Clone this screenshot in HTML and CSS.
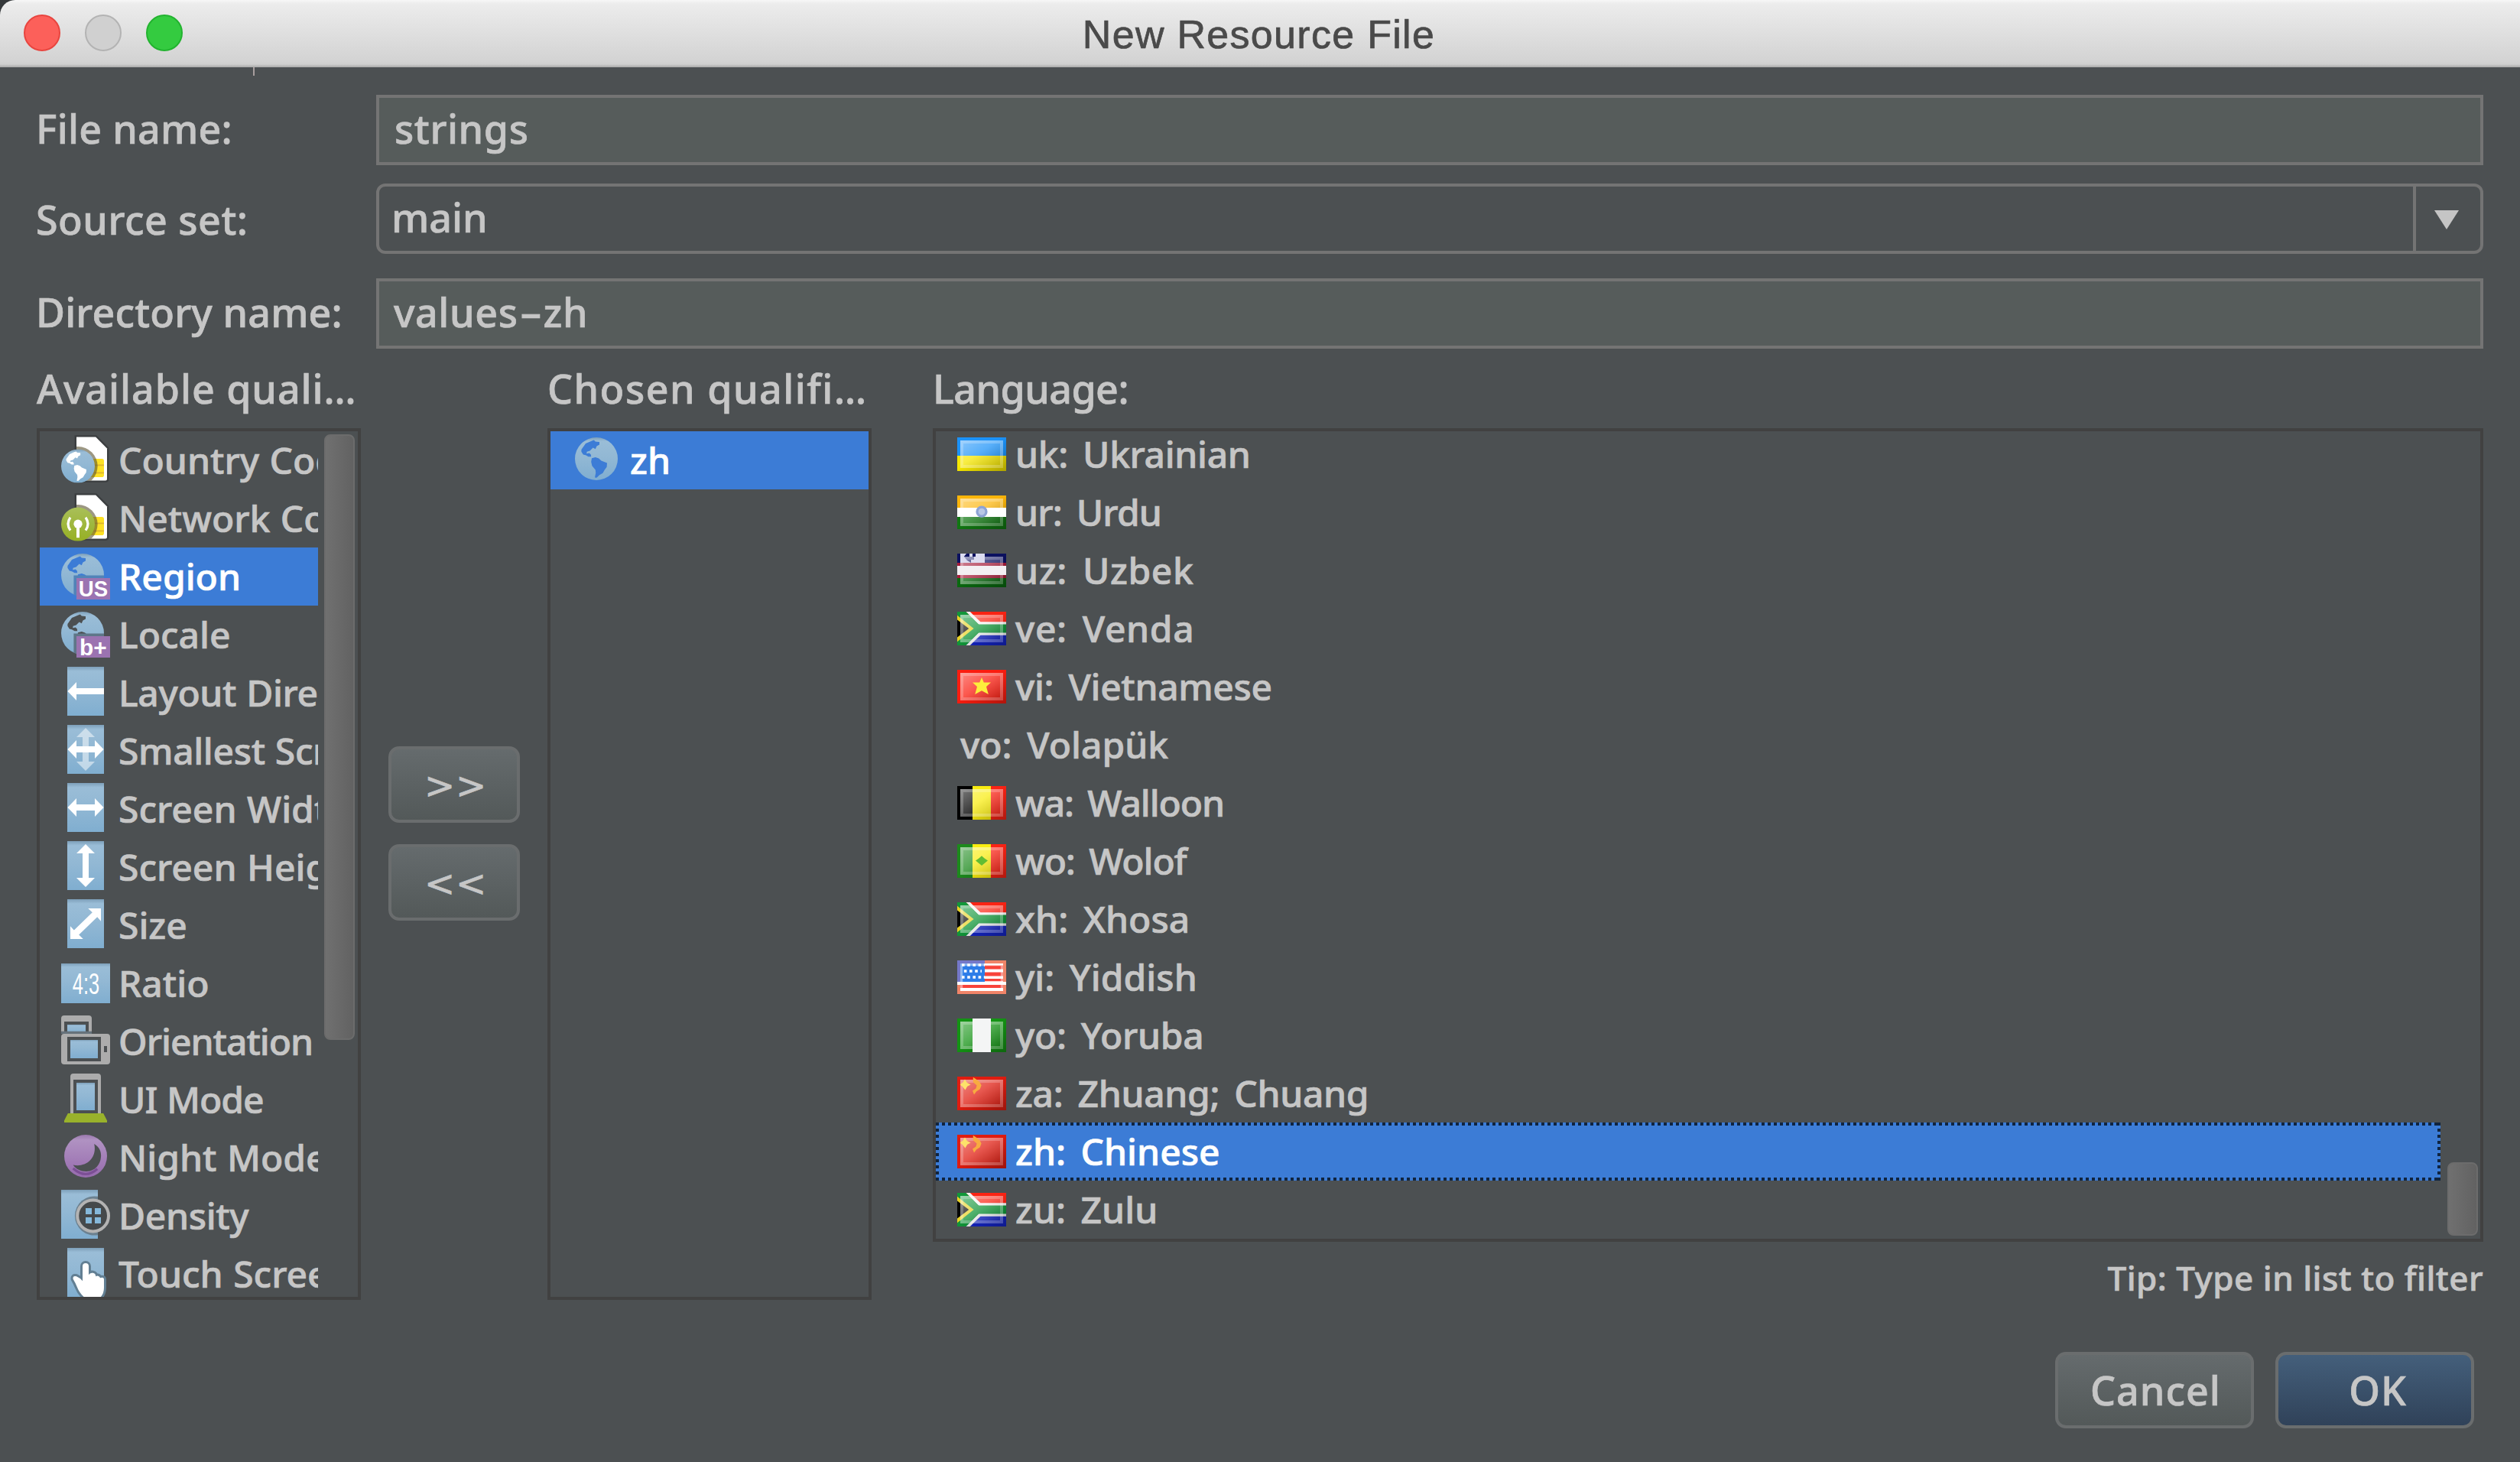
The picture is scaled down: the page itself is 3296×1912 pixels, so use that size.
FILE: index.html
```html
<!DOCTYPE html>
<html lang="en">
<head>
<meta charset="utf-8">
<title>New Resource File</title>
<link rel="stylesheet" href="styles.css">
</head>
<body>
<svg class="defs" width="0" height="0" aria-hidden="true">
  <defs>
    <linearGradient id="blue" x1="0" y1="0" x2="0" y2="1"><stop offset="0" stop-color="#7d9fb9"/><stop offset=".09" stop-color="#9abdd7"/><stop offset=".45" stop-color="#92b8d4"/><stop offset="1" stop-color="#80aed0"/></linearGradient>
    <linearGradient id="green" x1="0" y1="0" x2="0" y2="1"><stop offset="0" stop-color="#a9bf59"/><stop offset="1" stop-color="#96b024"/></linearGradient>
    <linearGradient id="purple" x1="0" y1="0" x2="0" y2="1"><stop offset="0" stop-color="#9a78ad"/><stop offset=".12" stop-color="#b092c2"/><stop offset="1" stop-color="#976bae"/></linearGradient>
    <linearGradient id="gloss" x1="0" y1="0" x2="1" y2="1"><stop offset="0" stop-color="#fff" stop-opacity=".48"/><stop offset="1" stop-color="#fff" stop-opacity="0"/></linearGradient>
    <linearGradient id="shade" x1="0" y1="0" x2="1" y2="1"><stop offset=".45" stop-color="#000" stop-opacity="0"/><stop offset="1" stop-color="#000" stop-opacity=".3"/></linearGradient>
    <clipPath id="page"><path d="M5 .9H11.3L15 4.6V15.1H5z"/></clipPath>
    <symbol id="globe" viewBox="0 0 14 14">
      <path fill="url(#blue)" fill-rule="evenodd" d="M7 0a7 7 0 1 1 0 14a7 7 0 1 1 0-14zM2.1 4L3.5 2L5.4 1.2L6.2.9L6.7 1.4L8 1.5V2.4L7.1 2.9L6.7 3.8L5.9 3.4L4.9 4.4L3.9 4.7L3.8 5.3L4.7 5.1L5.2 5.6L5.3 6.3L4.4 6.3L3.5 5.8L2.7 5.6L2.1 4.7zM5.5 6.8L6.7 6.5L7.8 6.9L8.6 7.6L10.5 8.4L10.4 9.7L9.7 10.6L9.1 11.7L8 12.3L7.1 13.2L6.5 13.1L6.8 11.6L6.7 10.6L5.6 9.3L5.3 8z"/>
    </symbol>
    <symbol id="sim" viewBox="0 0 16 16">
      <path d="M5 .9H11.3L15 4.6V14.6q0 .5-.5.5H5z" fill="#fff" stroke="#3b3e40" stroke-width="1.2" paint-order="stroke"/>
      <rect x="9" y="8" width="5" height="6" rx=".7" fill="#fde125"/>
      <path d="M9 10.1H14M9 12.6H14" stroke="#dfb52c" stroke-width=".4"/>
      <circle cx="5.5" cy="10.4" r="6.4" fill="#5a5230" fill-opacity=".6" clip-path="url(#page)"/>
    </symbol>
    <symbol id="gloss-frame" viewBox="0 0 16 11">
      <path d="M0 0H16V11H0z" fill="url(#shade)"/>
      <path d="M1 1H15V10H1z" fill="url(#gloss)"/>
      <path d="M1.5 1.5H14.5V9.5H1.5z" fill="none" stroke="#fff" stroke-opacity=".22" stroke-width="1"/>
    </symbol>
    <symbol id="za" viewBox="0 0 16 11">
      <path d="M0 0H16V5.5H0z" fill="#fb2414"/><path d="M0 5.5H16V11H0z" fill="#1526c8"/>
      <path d="M2.6 0L6.8 3.5H16V7.5H6.8L2.6 11H0V0z" fill="#f4f4f4"/>
      <path d="M2.9 0L7 4H16V7H7L2.9 11H0V0z" fill="#12973a"/>
      <path d="M2.9 0H4.2L7.6 3.3H16V4.1H7.1zM2.9 11H4.2L7.6 7.7H16V6.9H7.1z" fill="#f4f4f4"/>
      <path d="M0 1.2L5.4 5.5L0 9.8z" fill="#e8d227"/><path d="M0 2.6L3.8 5.5L0 8.4z" fill="#050505"/>
      <use href="#gloss-frame" width="16" height="11"/>
    </symbol>
    <symbol id="cn" viewBox="0 0 16 11">
      <path d="M0 0H16V11H0z" fill="#e01c10"/>
      <use href="#gloss-frame" width="16" height="11"/>
      <path d="M2.5 .9L3.2 2L4.4 2.6L3.3 3.2L2.6 4.4L1.8 3.3L.9 2.6L1.9 1.9z" fill="#fde26a"/>
      <path d="M5.2 .2L6.2 .9L7.3 1.7L7.9 2.9L7.4 4.1L6.3 4.8L5.5 5.9L5 4.6L6.1 3.9L6.4 2.9L5.2 1.8z" fill="#f8ab40"/>
    </symbol>
  </defs>
</svg>

<header class="titlebar">
  <div class="lights"><i class="light close"></i><i class="light minimize"></i><i class="light zoom"></i></div>
  <h1 class="title">New Resource File</h1>
</header>

<main class="dialog">
  <i class="tick"></i>
  <section class="form">
    <label class="label file-label">File name:</label>
    <div class="field file-field">strings</div>
    <label class="label source-label">Source set:</label>
    <div class="combo"><span class="combo-value">main</span><span class="combo-arrow"><svg width="32" height="25" viewBox="0 0 32 25"><path d="M0 0H32L16 25z" fill="#c5c5c5"/></svg></span></div>
    <label class="label dir-label">Directory name:</label>
    <div class="field dir-field">values<span class="hyphen">-</span>zh</div>
  </section>

  <section class="panels">
    <div class="column">
      <h2 class="heading wide">Available quali…</h2>
      <div class="listbox available">
        <ul class="list">
          <li class="row"><svg class="icon" viewBox="0 0 16 16"><use href="#sim" width="16" height="16"/><circle cx="5.5" cy="10.4" r="5.3" fill="#fff"/><use href="#globe" x="0" y="4.9" width="11" height="11"/></svg><span>Country Code</span></li>
          <li class="row"><svg class="icon" viewBox="0 0 16 16"><use href="#sim" width="16" height="16"/><circle cx="5.5" cy="10.4" r="5.5" fill="url(#green)"/><circle cx="5.5" cy="10.3" r="1.4" fill="#fff"/><path d="M5.5 10.5V14.8" stroke="#fff" stroke-width="1"/><path d="M3 8.2Q1.5 10.3 3 12.4M8 8.2Q9.5 10.3 8 12.4" fill="none" stroke="#fff" stroke-width=".8"/></svg><span>Network Code</span></li>
          <li class="row selected"><svg class="icon" viewBox="0 0 16 16"><use href="#globe" x="0" y="1" width="14" height="14"/><path d="M4.1 8.1H14V9H5V14.8L4.1 14.4z" fill="#5183b8"/><path d="M5 9H16V16H5z" fill="#9b73b1"/><text class="badge" x="5.7" y="15" textLength="9.6" lengthAdjust="spacingAndGlyphs">US</text></svg><span>Region</span></li>
          <li class="row"><svg class="icon" viewBox="0 0 16 16"><use href="#globe" x="0" y="1" width="14" height="14"/><path d="M4.1 8.1H14V9H5V14.8L4.1 14.4z" fill="#5f7688"/><path d="M5 9H16V16H5z" fill="#9b73b1"/><text class="badge" x="6" y="15.3" textLength="8.9" lengthAdjust="spacingAndGlyphs">b+</text></svg><span>Locale</span></li>
          <li class="row snug"><svg class="icon" viewBox="0 0 16 16"><path d="M2 0H14V16H2z" fill="url(#blue)"/><path d="M2.1 8L5 5V7H14V9H5V11z" fill="#fff"/></svg><span>Layout Direction</span></li>
          <li class="row snug"><svg class="icon" viewBox="0 0 16 16"><path d="M2 0H14V16H2z" fill="url(#blue)"/><path d="M8 1L11 4H9V12H11L8 15L5 12H7V4H5z" fill="#fff" opacity=".5"/><path d="M2.1 8L5 5V7H11V5L13.9 8L11 11V9H5V11z" fill="#fff"/></svg><span>Smallest Screen Width</span></li>
          <li class="row"><svg class="icon" viewBox="0 0 16 16"><path d="M2 0H14V16H2z" fill="url(#blue)"/><path d="M2.1 8L5 5V7H11V5L13.9 8L11 11V9H5V11z" fill="#fff"/></svg><span>Screen Width</span></li>
          <li class="row"><svg class="icon" viewBox="0 0 16 16"><path d="M2 0H14V16H2z" fill="url(#blue)"/><path d="M8 1L11 4H9V12H11L8 15L5 12H7V4H5z" fill="#fff"/></svg><span>Screen Height</span></li>
          <li class="row"><svg class="icon" viewBox="0 0 16 16"><path d="M2 0H14V16H2z" fill="url(#blue)"/><path d="M13 3V7.2L11.8 5.8L5.8 11.6L7.2 13H3V8.8L4.2 10.1L10.2 4.3L8.8 3z" fill="#fff"/></svg><span>Size</span></li>
          <li class="row"><svg class="icon" viewBox="0 0 16 16"><path d="M0 2H16V15H0z" fill="url(#blue)"/><text class="ratio" x="3.7" y="12" textLength="8.8" lengthAdjust="spacingAndGlyphs">4:3</text></svg><span>Ratio</span></li>
          <li class="row tight"><svg class="icon" viewBox="0 0 16 16"><path d="M0 6V1Q0 0 1 0H9Q10 0 10 1V6H9V2H1V6z" fill="#acacac"/><path d="M2 3H8V6H2z" fill="url(#blue)"/><path d="M0 5.2H10V6H0z" fill="#66727b"/><path fill-rule="evenodd" d="M1 6H15Q16 6 16 7V15Q16 16 15 16H1Q0 16 0 15V7Q0 6 1 6zM2 7V15H13V7zM14 10V12H15V10z" fill="#acacac"/><path d="M3 8H12V14H3z" fill="url(#blue)"/></svg><span>Orientation</span></li>
          <li class="row tight"><svg class="icon" viewBox="0 0 16 16"><path d="M3 13V1Q3 0 4 0H12Q13 0 13 1V13H12V2H4V13z" fill="#acacac"/><path d="M5 3H11V12H5z" fill="url(#blue)"/><path d="M2.2 13H13.8L15 15.4V16H1V15.4z" fill="#99b22b"/></svg><span>UI Mode</span></li>
          <li class="row"><svg class="icon" viewBox="0 0 16 16"><circle cx="8" cy="8" r="7" fill="url(#purple)"/><path d="M3.9 12Q8 15.6 11.8 12.2" fill="none" stroke="#7c4f95" stroke-width=".8"/><path d="M10.8 4C12.5 5 13.2 6.6 13 8.3C12.8 11 10.8 13 8.2 13C6.3 13 4.8 12.2 3.9 10.9C8.5 11.8 11.8 8.3 10.8 4z" fill="#4c5052"/></svg><span>Night Mode</span></li>
          <li class="row snug"><svg class="icon" viewBox="0 0 16 16"><path d="M0 0H12V16H0z" fill="url(#blue)"/><path d="M12 2.2A6.4 6.4 0 1 0 12 14.8z" fill="#6c8190"/><circle cx="10.4" cy="8.5" r="5.1" fill="#45494b" stroke="#b3b3b3" stroke-width="1"/><path d="M8 6H10V8H8zM11 6H13V8H11zM8 9H10V11H8zM11 9H13V11H11z" fill="#85b8da"/></svg><span>Density</span></li>
          <li class="row"><svg class="icon" viewBox="0 0 16 16"><path d="M2 0H14V16H2z" fill="url(#blue)"/><path d="M7 10.8V6a1 1 0 0 1 2 0V8.8q.4-.8 1.4-.6q.9.2.9 1.1q.9-.5 1.5.5q1.2-.4 1.2.6V13q0 1.8-1 3H7.4Q5.9 14.6 5.3 13Q4.6 11.3 3.9 10.2Q3.7 9 5 9.3Q6.2 9.8 7 10.8z" fill="#fff" stroke="#627f93" stroke-width="1.5" paint-order="stroke"/></svg><span>Touch Screen</span></li>
        </ul>
        <i class="thumb thumb-left"></i>
      </div>
    </div>

    <div class="transfer">
      <button class="button arrows">&gt;&gt;</button>
      <button class="button arrows">&lt;&lt;</button>
    </div>

    <div class="column">
      <h2 class="heading wider">Chosen qualifi…</h2>
      <div class="listbox chosen">
        <ul class="list">
          <li class="row selected"><svg class="icon globe-icon" viewBox="0 0 14 14"><use href="#globe" width="14" height="14"/></svg><span>zh</span></li>
        </ul>
      </div>
    </div>

    <div class="column language">
      <h2 class="heading narrow">Language:</h2>
      <div class="listbox languages">
        <ul class="list">
          <li class="row snug"><svg class="flag" viewBox="0 0 16 11"><path d="M0 0H16V6H0z" fill="#1b92f8"/><path d="M0 6H16V11H0z" fill="#f6e700"/><use href="#gloss-frame" width="16" height="11"/></svg><span>uk: Ukrainian</span></li>
          <li class="row tight"><svg class="flag" viewBox="0 0 16 11"><path d="M0 0H16V4H0z" fill="#fcb50a"/><path d="M0 4H16V7H0z" fill="#fff"/><path d="M0 7H16V11H0z" fill="#117812"/><use href="#gloss-frame" width="16" height="11"/><path d="M1 4H16V7H1z" fill="#fff"/><circle cx="8" cy="5.3" r="1.5" fill="#b9c7e6" stroke="#8da3d5" stroke-width=".8"/></svg><span>ur: Urdu</span></li>
          <li class="row open"><svg class="flag" viewBox="0 0 16 11"><path d="M0 0H16V3H0z" fill="#0c1160"/><path d="M0 3H16V8H0z" fill="#a61c3a"/><path d="M0 8H16V11H0z" fill="#0a6a10"/><use href="#gloss-frame" width="16" height="11"/><path d="M0 4H16V7H0z" fill="#f3eff3"/><path d="M1 0H3L2.2 1L3.2 2.2L4.5 3H1zM4 0H5V1H4zM6 0H9V3H4.5V2H5.5V1H6z" fill="#dcdcf0"/></svg><span>uz: Uzbek</span></li>
          <li class="row open"><svg class="flag" viewBox="0 0 16 11"><use href="#za" width="16" height="11"/></svg><span>ve: Venda</span></li>
          <li class="row snug"><svg class="flag" viewBox="0 0 16 11"><path d="M0 0H16V11H0z" fill="#fb1d10"/><use href="#gloss-frame" width="16" height="11"/><path d="M8 2.5L8.7 4.1H11L9.5 5.5L10.2 8L8 6.8L5.8 8L6.5 5.5L5 4.1H7.3z" fill="#fdee3c"/></svg><span>vi: Vietnamese</span></li>
          <li class="row plain">vo: Volapük</li>
          <li class="row close-set"><svg class="flag" viewBox="0 0 16 11"><path d="M0 0H5V11H0z" fill="#000"/><path d="M5 0H11V11H5z" fill="#f9ec10"/><path d="M11 0H16V11H11z" fill="#fb2315"/><use href="#gloss-frame" width="16" height="11"/></svg><span>wa: Walloon</span></li>
          <li class="row close-set"><svg class="flag" viewBox="0 0 16 11"><path d="M0 0H5V11H0z" fill="#1c8a1c"/><path d="M5 0H11V11H5z" fill="#f9ec10"/><path d="M11 0H16V11H11z" fill="#fb2315"/><use href="#gloss-frame" width="16" height="11"/><path d="M8 3.8L8.9 4.6L10 5.4L9 6.2L8 7L7 6.2L6 5.4L7.1 4.6z" fill="#62bd33"/></svg><span>wo: Wolof</span></li>
          <li class="row"><svg class="flag" viewBox="0 0 16 11"><use href="#za" width="16" height="11"/></svg><span>xh: Xhosa</span></li>
          <li class="row"><svg class="flag" viewBox="0 0 16 11"><path d="M0 0H16V11H0z" fill="#f08468"/><path d="M1 1H15V10H1z" fill="#fff"/><path d="M9 1.6H15V2.9H9zM9 3.9H15V5.1H9zM9 6H15V6.8H9zM1 8H15V9H1z" fill="#f8433a"/><path d="M0 7H16V8H0z" fill="#fff"/><path d="M0 0H9V7H0z" fill="#7478c8"/><path d="M1 1H9V7H1z" fill="#2e7de8"/><path d="M1.5 1.5H9M2.2 3.5H8M1.5 5.5H9" stroke="#fff" stroke-width=".9" stroke-dasharray=".9 .9"/><path d="M1.4 1.4H14.6V9.6H1.4z" fill="none" stroke="#fff" stroke-opacity=".45" stroke-width=".8"/></svg><span>yi: Yiddish</span></li>
          <li class="row snug"><svg class="flag" viewBox="0 0 16 11"><path d="M0 0H16V11H0z" fill="#149314"/><use href="#gloss-frame" width="16" height="11"/><path d="M5 0H11V11H5z" fill="#f4f5f5"/></svg><span>yo: Yoruba</span></li>
          <li class="row snug"><svg class="flag" viewBox="0 0 16 11"><use href="#cn" width="16" height="11"/></svg><span>za: Zhuang; Chuang</span></li>
          <li class="row selected focused"><svg class="flag" viewBox="0 0 16 11"><use href="#cn" width="16" height="11"/></svg><span>zh: Chinese</span></li>
          <li class="row"><svg class="flag" viewBox="0 0 16 11"><use href="#za" width="16" height="11"/></svg><span>zu: Zulu</span></li>
        </ul>
        <i class="thumb thumb-right"></i>
      </div>
      <p class="tip">Tip: Type in list to filter</p>
    </div>
  </section>

  <footer class="actions">
    <button class="button">Cancel</button>
    <button class="button primary">OK</button>
  </footer>
</main>
</body>
</html>
```
FILE: styles.css
```css
* { box-sizing: border-box; margin: 0; padding: 0; }
body {
  width: 3296px; height: 1912px; overflow: hidden;
  background: #4c5052; color: #c6c6c6;
  font: 500 52px "Noto Sans", "Open Sans", sans-serif;
  -webkit-text-stroke: .7px currentColor;
}
.defs { position: absolute; }

/* Title bar */
.titlebar {
  height: 88px; display: grid; grid-template-columns: 300px 1fr 300px; align-items: center;
  background: linear-gradient(#f7f7f7 0, #ececec 5px, #d3d3d3 80px, #cfcfcf 84px, #a8a8a8 88px);
  border-radius: 20px 0 0 0; box-shadow: -20px -20px 0 20px #35383a;
}
.lights { display: flex; gap: 32px; padding-left: 31px; margin-top: -2px; }
.light { width: 48px; height: 48px; border-radius: 50%; border: 2px solid; }
.close { background: #fc605a; border-color: #e8453f; }
.minimize { background: #d0d0d0; border-color: #b3b3b3; }
.zoom { background: #34cb40; border-color: #22b32f; }
.title {
  font: 400 52px/90px "Liberation Sans", Arial, sans-serif; letter-spacing: 1.3px;
  text-align: center; color: #4a4a4a; padding-right: 3px; height: 88px;
}

/* Form */
.dialog { position: relative; padding: 36px 48px 0; }
.tick { position: absolute; left: 331px; top: 0; width: 2px; height: 11px; background: #a89e9e; }
.form { display: grid; grid-template-columns: 444px 1fr; grid-template-rows: 116px 124px 92px; }
.label { margin-left: -1px; line-height: 88px; letter-spacing: .25px; white-space: nowrap; }
.source-label { line-height: 93px; letter-spacing: .5px; }
.dir-label { line-height: 87px; letter-spacing: .15px; }
.field, .combo { height: 92px; border: 4px solid #747474; line-height: 80px; }
.field { background: #565c5b; padding-left: 20px; letter-spacing: .6px; }
.dir-field { line-height: 79px; padding-left: 19px; }
.hyphen { display: inline-block; width: 33px; text-align: center; letter-spacing: 0; transform: scaleX(1.75); }
.combo { display: flex; border-radius: 12px; letter-spacing: 0; }
.combo-value { flex: 1; padding-left: 16px; }
.combo-arrow { width: 88px; border-left: 4px solid #747474; display: flex; justify-content: center; padding: 31px 4px 0 0; }

/* Qualifier and language panels */
.panels { display: flex; gap: 36px; height: 1244px; }
.column { width: 424px; }
.language { flex: 1; margin-left: 44px; }
.heading { height: 104px; font-size: 52px; font-weight: 500; line-height: 103px; white-space: nowrap; }
.wide { letter-spacing: .95px; }
.wider { letter-spacing: 1.5px; }
.narrow { letter-spacing: -.55px; }
.listbox { position: relative; height: 1140px; border: 4px solid #414141; overflow: hidden; }
.list { list-style: none; font-size: 48px; line-height: 75px; letter-spacing: 0; word-spacing: 7px; }
.row { height: 76px; display: flex; gap: 12px; padding-left: 28px; white-space: nowrap; overflow: hidden; }
.row span { flex: none; }
.selected { background: #3c7cd6; color: #fff; }
.icon { width: 64px; height: 64px; margin-top: 4px; flex: none; }
.flag { width: 64px; height: 44px; margin-top: 16px; flex: none; }
.badge, .ratio { font-family: "Liberation Sans", Arial, sans-serif; font-weight: 700; fill: #fff; letter-spacing: 0; -webkit-text-stroke: 0; }
.badge { font-size: 7.4px; }
.ratio { font-size: 9.8px; font-weight: 400; }
.available .list { width: 364px; word-spacing: 1px; }
.available .row { gap: 11px; }
.snug { letter-spacing: -.35px; }
.tight { letter-spacing: -.8px; }
.available .tight { letter-spacing: -1px; }
.chosen .row { padding-left: 32px; gap: 16px; }
.globe-icon { width: 56px; height: 56px; margin-top: 8px; }
.languages { height: 1064px; }
.languages .list { width: 1968px; margin-top: -8px; }
.open { letter-spacing: .6px; }
.close-set { letter-spacing: -1.1px; }
.plain { padding-left: 32px; }
.focused {
  background:
    repeating-linear-gradient(90deg, #10243f 0 4px, transparent 4px 8px) 0 0 / 100% 4px no-repeat,
    repeating-linear-gradient(90deg, #10243f 0 4px, transparent 4px 8px) 0 100% / 100% 4px no-repeat,
    repeating-linear-gradient(#10243f 0 4px, transparent 4px 8px) 0 0 / 4px 100% no-repeat,
    repeating-linear-gradient(#10243f 0 4px, transparent 4px 8px) 100% 0 / 4px 100% no-repeat,
    #3c7cd6;
}
.thumb {
  position: absolute; right: 4px; width: 40px; border-radius: 8px;
  background: linear-gradient(90deg, #707070, #626262); border: 2px solid #6c6c6c;
}
.thumb-left { top: 4px; height: 792px; }
.thumb-right { bottom: 4px; height: 96px; right: 3px; }
.tip { font-size: 44px; line-height: 94px; letter-spacing: .5px; text-align: right; }

/* Buttons */
.transfer { width: 172px; padding-top: 520px; display: flex; flex-direction: column; gap: 28px; }
.button {
  width: 260px; height: 100px; border: 4px solid #6a6d6e; border-radius: 14px;
  background: linear-gradient(#656b6d, #535959); color: inherit;
  font: inherit; line-height: 90px; letter-spacing: 1px; padding-left: 3px;
}
.arrows { width: 172px; padding: 0 0 0 4px; font: 400 48px/94px "DejaVu Sans", sans-serif; letter-spacing: .8px; }
.primary { background: linear-gradient(#445f7b, #304259); padding-left: 8px; }
.actions { display: flex; justify-content: flex-end; gap: 28px; padding: 68px 12px 0 0; }
```
